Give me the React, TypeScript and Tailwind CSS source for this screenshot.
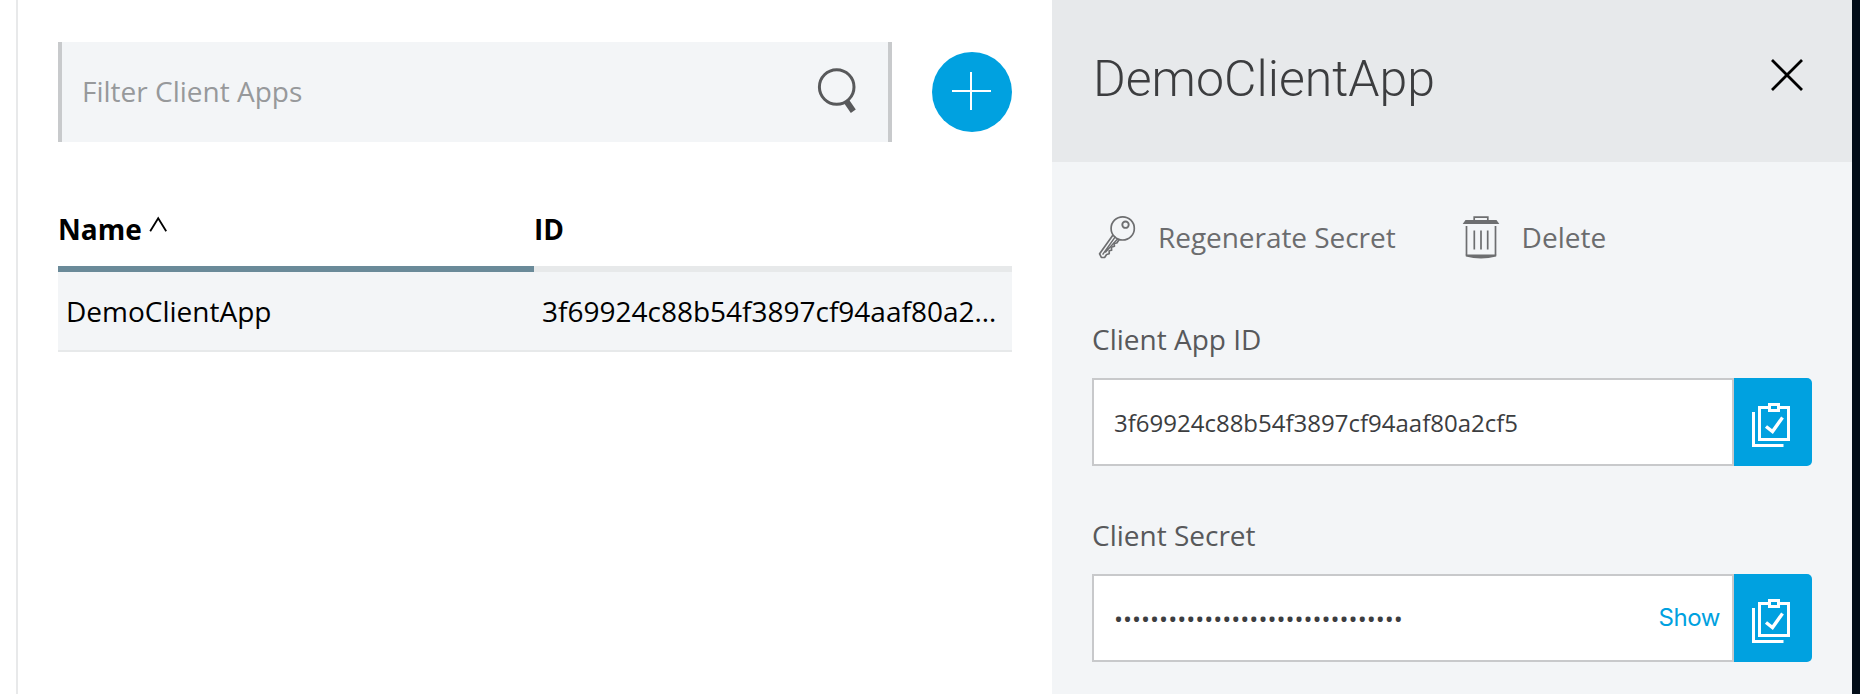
import React from "react";

const Search = () => (
  <svg width="40" height="48" viewBox="0 0 40 48" fill="none" stroke="#58595b">
    <circle cx="19.7" cy="19" r="17.3" strokeWidth="3" />
    <path d="M29.6 33.5L36.3 43.3" strokeWidth="6" />
  </svg>
);

const Plus = () => (
  <svg width="80" height="80" viewBox="0 0 80 80" stroke="#fff" strokeWidth="2">
    <path d="M20 39H59M39 20V58" />
  </svg>
);

const KeyIcon = () => (
  <svg width="38" height="44" viewBox="0 0 38 44" fill="none" stroke="#6d6e70" strokeWidth="1.7" strokeLinejoin="round">
    <circle cx="24.7" cy="13.4" r="11.6" />
    <circle cx="27.5" cy="9.7" r="3.2" strokeWidth="1.9" />
    <path d="M15 20L1.6 38.8L3.4 42.5H6.6L8.6 39.5L11.2 38.8V35.8L13.6 35.2L13.4 32.2L16.4 31.3L16.2 28.3L18.8 28L21.2 24.6" />
    <path d="M17.4 21.6L4.6 39.6M19.8 23.8L7.2 37.4" strokeWidth="1.5" />
  </svg>
);

const TrashIcon = () => (
  <svg width="38" height="44" viewBox="0 0 38 44" fill="none" stroke="#6d6e70" strokeWidth="1.7">
    <path d="M12.2 6V2.2H25.8V6" />
    <path d="M3.5 5H34.5L37.3 9H.7Z" fill="#6d6e70" stroke="none" />
    <path d="M4.5 11V40.6M33.5 11V40.6" />
    <path d="M3.8 39.5H34.2V41.6Q19 45.4 3.8 41.6Z" fill="#6d6e70" stroke="none" />
    <path d="M12.3 15.5V34.5M19 15.5V34.5M25.7 15.5V34.5" />
  </svg>
);

const CopyButton = () => (
  <button className="flex h-[88px] w-[78px] shrink-0 items-center justify-center rounded-r-[5px] bg-[#00a1e0]">
    <svg className="mt-[6px] -ml-1" width="38" height="44" viewBox="0 0 38 44" fill="none" stroke="#fff" strokeWidth="3">
      <path d="M1.5 9V42.5H31.5" />
      <path d="M17 4.5H7.5V36.5H36.5V4.5H27" />
      <path d="M17.5 1.5H26.5V7.5H17.5Z" />
      <path d="M14 23.5L20.5 28.5L30.5 14.5" strokeWidth="3.4" />
    </svg>
  </button>
);

const Field = ({ label, children }: { label: string; children: React.ReactNode }) => (
  <div className="h-[196px]">
    <label className="block h-[62px] text-[28px] leading-[46px] text-[#58595b]">{label}</label>
    <div className="flex">
      <div className="flex h-[88px] w-[642px] items-center justify-between border-2 border-[#c8c9cb] bg-white pr-[12px] pl-5 text-[24px] text-[#3c3d3f]">
        {children}
      </div>
      <CopyButton />
    </div>
  </div>
);

export default function App() {
  return (
    <div className="flex h-[694px] w-[1860px] overflow-hidden bg-white pl-4 font-['Open_Sans',sans-serif]">
      <main className="w-[1036px] border-l-2 border-[#e8e9ea] pt-[42px] pr-10 pl-10">
        <div className="flex items-center justify-between">
          <div className="flex h-[100px] w-[834px] items-center justify-between border-x-4 border-[#c8cacc] bg-[#f3f5f7] pr-[31px] pl-5">
            <span className="pb-[2px] text-[28px] leading-[40px] text-[#97999b]">Filter Client Apps</span>
            <Search />
          </div>
          <button className="h-20 w-20 rounded-full bg-[#00a1e0]">
            <Plus />
          </button>
        </div>
        <div className="mt-[58px] flex text-[28px] font-bold leading-[58px] text-black">
          <div className="flex h-[72px] w-[476px] border-b-[6px] border-[#6a8a99]">
            Name
            <svg className="mt-[16px] ml-[7px]" width="20" height="20" viewBox="0 0 20 20" fill="none" stroke="#000" strokeWidth="1.8">
              <path d="M1.2 15.2L9.2 2.2L17.2 15.2" />
            </svg>
          </div>
          <div className="h-[72px] flex-1 border-b-[6px] border-[#e7e9ea]">ID</div>
        </div>
        <div className="flex h-20 border-b-2 border-[#e7e9ea] bg-[#f3f5f7] text-[28px] leading-[78px] text-black">
          <div className="w-[476px] pl-2">DemoClientApp</div>
          <div className="min-w-0 flex-1 truncate px-2">3f69924c88b54f3897cf94aaf80a2cf5</div>
        </div>
      </main>
      <aside className="w-[800px] bg-[#f3f5f7]">
        <header className="flex h-[162px] items-center justify-between bg-[#e7e9eb] pr-[48px] pl-[41px]">
          <h1 className="pb-[3px] font-['Roboto',sans-serif] text-[50px] font-light text-[#3c3d3f]">DemoClientApp</h1>
          <svg className="-mt-3" width="34" height="34" viewBox="0 0 34 34" stroke="#000" strokeWidth="2.8">
            <path d="M2 2L32 32M32 2L2 32" />
          </svg>
        </header>
        <div className="pt-[51px] pl-10">
          <div className="flex h-[48px] items-center text-[28px] text-[#6b6c6e]">
            <span className="ml-1.5"><KeyIcon /></span>
            <span className="ml-[22px] tracking-[-0.05px]">Regenerate Secret</span>
            <span className="ml-[66px]"><TrashIcon /></span>
            <span className="ml-[22px]">Delete</span>
          </div>
          <div className="mt-[55px]">
            <Field label="Client App ID">
              <span className="pt-[2px]">3f69924c88b54f3897cf94aaf80a2cf5</span>
            </Field>
            <Field label="Client Secret">
              <span className="pt-[2px]">••••••••••••••••••••••••••••••••</span>
              <button className="font-['Inter',sans-serif] text-[24px] tracking-[-0.4px] text-[#00a1e0]">Show</button>
            </Field>
          </div>
        </div>
      </aside>
      <div className="flex-1 bg-[#020d18]" />
    </div>
  );
}
